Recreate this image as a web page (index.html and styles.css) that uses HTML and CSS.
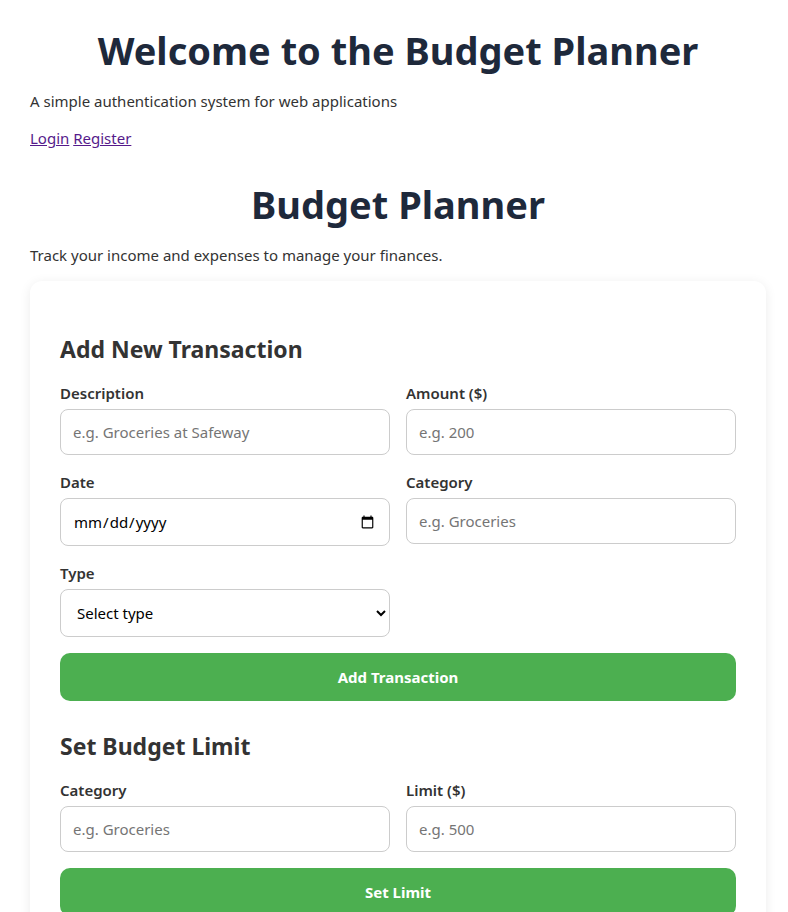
FILE: index.html
```html
<!DOCTYPE html>
<html lang="en">
<head>
<meta charset="utf-8">
<title>Budget Planner</title>
<link rel="stylesheet" href="styles.css">
</head>
<body>
<div class="page">
  <h1 class="title">Welcome to the Budget Planner</h1>
  <p class="text">A simple authentication system for web applications</p>
  <nav class="links"><a href="#login">Login</a> <a href="#register">Register</a></nav>

  <h1 class="title title-second">Budget Planner</h1>
  <p class="text">Track your income and expenses to manage your finances.</p>

  <div class="card">
    <section class="section">
      <h2 class="section-title">Add New Transaction</h2>
      <form class="form">
        <div class="grid">
          <div class="field">
            <label class="label">Description</label>
            <input class="input" type="text" placeholder="e.g. Groceries at Safeway">
          </div>
          <div class="field">
            <label class="label">Amount ($)</label>
            <input class="input" type="text" placeholder="e.g. 200">
          </div>
          <div class="field">
            <label class="label">Date</label>
            <input class="input" type="date">
          </div>
          <div class="field">
            <label class="label">Category</label>
            <input class="input" type="text" placeholder="e.g. Groceries">
          </div>
          <div class="field">
            <label class="label">Type</label>
            <select class="input select">
              <option>Select type</option>
              <option>Income</option>
              <option>Expense</option>
            </select>
          </div>
        </div>
        <button type="button" class="button">Add Transaction</button>
      </form>
    </section>

    <section class="section">
      <h2 class="section-title">Set Budget Limit</h2>
      <form class="form">
        <div class="grid">
          <div class="field">
            <label class="label">Category</label>
            <input class="input" type="text" placeholder="e.g. Groceries">
          </div>
          <div class="field">
            <label class="label">Limit ($)</label>
            <input class="input" type="text" placeholder="e.g. 500">
          </div>
        </div>
        <button type="button" class="button">Set Limit</button>
      </form>
    </section>
  </div>
</div>
</body>
</html>
```

FILE: styles.css
```css
html, body {
  margin: 0;
  padding: 0;
  background: #ffffff;
}

body {
  font-family: "Noto Sans", "Open Sans", sans-serif;
  color: #333333;
  font-size: 16px;
}

.page {
  padding: 27px 22px 40px 30px;
}

.title {
  font-size: 38px;
  line-height: 46px;
  font-weight: 700;
  color: #1e293b;
  text-align: center;
  margin: 0 0 17px 0;
}

.title-second {
  margin-top: 32px;
  margin-bottom: 17px;
}

.text {
  margin: 0;
  line-height: 22px;
  font-size: 15px;
}

.links {
  margin-top: 15px;
  line-height: 22px;
  font-size: 15px;
}

.links a {
  color: #551a8b;
}

.card {
  margin-top: 15px;
  background: #ffffff;
  border-radius: 12px;
  box-shadow: 0 2px 12px rgba(0, 0, 0, 0.08);
  padding: 30px;
  display: flex;
  flex-direction: column;
}

.section {
  margin-bottom: 7px;
}

.section-title {
  font-size: 23px;
  line-height: 32px;
  font-weight: 700;
  color: #333333;
  margin: 22px 0 18px 0;
}

.form {
  display: flex;
  flex-direction: column;
  gap: 16px;
}

.grid {
  display: grid;
  grid-template-columns: 1fr 1fr;
  column-gap: 16px;
  row-gap: 17px;
}

.field {
  display: flex;
  flex-direction: column;
}

.label {
  font-size: 15px;
  line-height: 21px;
  font-weight: 600;
  color: #333333;
  margin-bottom: 5px;
}

.input {
  font-family: "Noto Sans", "Open Sans", sans-serif;
  font-size: 15px;
  padding: 12px;
  border: 1px solid #cccccc;
  border-radius: 8px;
  background: #ffffff;
  color: #000000;
  height: 46px;
  box-sizing: border-box;
}

.input[type="date"],
.select {
  height: 48px;
}

.input::placeholder {
  color: #757575;
}

.button {
  font-family: "Noto Sans", "Open Sans", sans-serif;
  height: 48px;
  border: none;
  border-radius: 10px;
  background: #4caf50;
  color: #ffffff;
  font-size: 15px;
  font-weight: 700;
}
```
